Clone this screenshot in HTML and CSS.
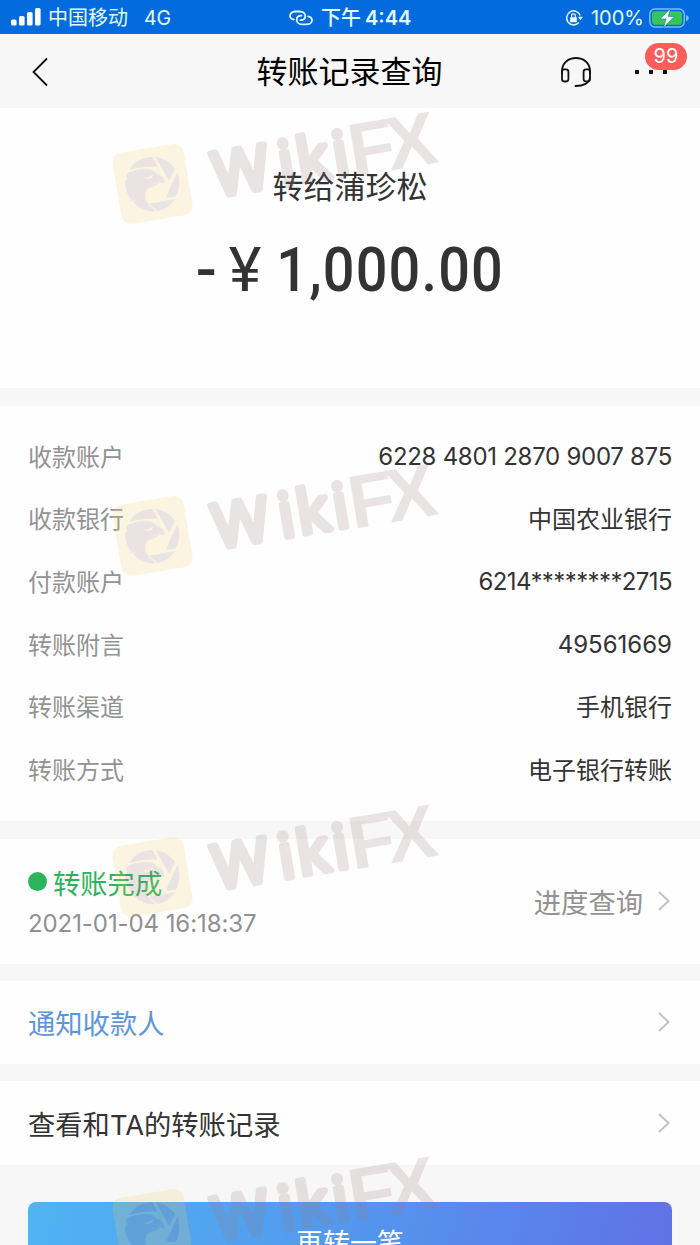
FILE: index.html
```html
<!DOCTYPE html>
<html lang="zh-CN">
<head>
    <meta charset="UTF-8">
    <meta name="viewport" content="width=device-width, initial-scale=1.0">
    <title>转账记录查询</title>
    <link rel="stylesheet" href="styles.css">
</head>
<body>
    <div class="app">
        <div class="status-bar">
            <div class="status-left">
                <svg class="signal" width="30" height="18" viewBox="0 0 30 18" fill="#fff">
                    <rect x="0" y="11.5" width="5.6" height="6" rx="1.6"/>
                    <rect x="8" y="8" width="5.6" height="9.5" rx="1.6"/>
                    <rect x="16" y="4" width="5.6" height="13.5" rx="1.6"/>
                    <rect x="24" y="0" width="5.6" height="17.5" rx="1.6"/>
                </svg>
                <span class="carrier">中国移动</span>
                <span class="network">4G</span>
            </div>
            <div class="status-center">
                <svg width="24" height="16" viewBox="0 0 24 16" fill="none" stroke="#e3fbff" stroke-width="1.8" stroke-linecap="round">
                    <path d="M4.800 9.600C2.300 9 1 7.500 1 5.700C1 3.200 3.500 1.500 6.500 1.500H10.500C14 1.500 16.300 3.500 16.300 6C16.300 8.600 14.200 10.200 11.500 10.200"/>
                    <path d="M19.200 6.300C21.700 6.900 23 8.400 23 10.200C23 12.700 20.500 14.400 17.500 14.400H13.500C10 14.400 7.700 12.400 7.700 9.900C7.700 7.300 9.800 5.700 12.500 5.700"/>
                </svg>
                <span class="clock">下午<b>4:44</b></span>
            </div>
            <div class="status-right">
                <svg width="18" height="18" viewBox="0 0 18 18" fill="none" stroke="#e3fbff" stroke-width="1.5">
                    <path d="M15.200 6.500A7 7 0 1 0 13.800 13.600"/>
                    <path d="M12.800 7.800H18L15.400 11.200Z" fill="#e3fbff" stroke="none"/>
                    <rect x="5.200" y="8.200" width="6.600" height="5" rx=".8" fill="#fff" stroke="none"/>
                    <path d="M6.600 8.200V6.800A1.900 1.900 0 0 1 10.400 6.800V8.200" stroke-width="1.200"/>
                </svg>
                <span class="percent">100%</span>
                <svg width="41" height="20" viewBox="0 0 41 20">
                    <rect x=".8" y="1" width="34.400" height="18" rx="5" fill="none" stroke="#83b9ee" stroke-width="1.500"/>
                    <rect x="3" y="3.200" width="30" height="13.600" rx="3" fill="#35c659"/>
                    <path d="M37 7V13C38.800 12.500 39.800 11.500 39.800 10S38.800 7.500 37 7Z" fill="#83b9ee"/>
                    <path d="M21.500 .6L11 11H17L14.500 19.400L25.200 8.600H19.200Z" fill="#fff" stroke="#1590ae" stroke-width=".7"/>
                </svg>
            </div>
        </div>

        <header class="nav">
            <svg class="back" width="16" height="30" viewBox="0 0 16 30" fill="none" stroke="#111" stroke-width="1.8">
                <path d="M15 1.500L1.500 15L15 28.500"/>
            </svg>
            <h1>转账记录查询</h1>
            <div class="nav-actions">
                <svg width="32" height="32" viewBox="0 0 32 32" fill="none" stroke="#111" stroke-width="1.800" stroke-linecap="round">
                    <path d="M2 17.500V15C2 7 8.500 2 16 2S30 7 30 15V17.500"/>
                    <rect x="2" y="13.300" width="6.400" height="12.200" rx="2.400"/>
                    <rect x="23.600" y="13.300" width="6.400" height="12.200" rx="2.400"/>
                    <path d="M29.800 22C29.400 27 23.500 30 15.500 30"/>
                </svg>
                <div class="more">
                    <i></i><i></i><i></i>
                    <span class="badge">99</span>
                </div>
            </div>
        </header>

        <section class="panel summary">
            <p class="payee">转给蒲珍松</p>
            <p class="amount"><span class="minus">-</span><span class="yuan">¥</span><span class="digits">1,000.00</span></p>
        </section>

        <section class="panel details">
            <div class="row"><span>收款账户</span><span class="value number">6228 4801 2870 9007 875</span></div>
            <div class="row"><span>收款银行</span><span class="value">中国农业银行</span></div>
            <div class="row"><span>付款账户</span><span class="value number masked">6214********2715</span></div>
            <div class="row"><span>转账附言</span><span class="value number memo">49561669</span></div>
            <div class="row"><span>转账渠道</span><span class="value">手机银行</span></div>
            <div class="row"><span>转账方式</span><span class="value">电子银行转账</span></div>
        </section>

        <section class="panel progress">
            <div>
                <p class="state"><i class="dot"></i><span>转账完成</span></p>
                <p class="time">2021-01-04 16:18:37</p>
            </div>
            <div class="progress-link">
                <span>进度查询</span>
                <svg class="chevron" viewBox="0 0 12 20"><path d="M1 1L10.500 10L1 19"/></svg>
            </div>
        </section>

        <section class="panel link notify">
            <span>通知收款人</span>
            <svg class="chevron" viewBox="0 0 12 20"><path d="M1 1L10.500 10L1 19"/></svg>
        </section>

        <section class="panel link history">
            <span>查看和TA的转账记录</span>
            <svg class="chevron" viewBox="0 0 12 20"><path d="M1 1L10.500 10L1 19"/></svg>
        </section>

        <button class="again">再转一笔</button>

        <!-- watermark layer -->
        <svg class="watermarks" width="700" height="1245" viewBox="0 0 700 1245">
            <defs>
                <g id="mark">
                    <rect x="-36" y="-36" width="72" height="72" rx="10" fill="#f0cd6e"/>
                    <g transform="rotate(9.500) scale(.3333) translate(-133.500 -138)">
                        <g fill="#9b7d7d">
                            <path d="M64 96C78 71 105 56 133 57L149 86Q105 84 64 96Z"/>
                            <path d="M143 57C168 61 188 74 201 93L183 128Z"/>
                            <path d="M208 103C217 128 215 153 203 176L174 178Z"/>
                            <path d="M200 184C188 203 171 215 149 219L124 197Z"/>
                            <path d="M60 104C75 99 90 94 110 94C128 92 140 96 146 108C160 110 169 121 168 137C162 132 154 133 149 138C142 146 127 144 118 154C107 166 111 185 121 199L143 219C129 221 117 218 106 214L103 207L102 212C93 208 85 202 78 195L79 185L73 190C59 172 51 153 51 133L60 116L53 120C55 113 57 108 60 104Z"/>
                        </g>
                        <path d="M110 120Q123 122 135 111M119 119Q126 124 131 115" fill="none" stroke="#f0cd6e" stroke-width="4"/>
                        <path d="M131 139Q148 137 161 127" fill="none" stroke="#f0cd6e" stroke-width="2"/>
                    </g>
                    <g fill="#9b7d7d">
                        <text class="mark-round" x="61 127.500 146 182.500" y="23">Wiki</text>
                        <text class="mark-square" x="199 237" y="26">FX</text>
                    </g>
                </g>
            </defs>
            <use href="#mark" opacity=".2" transform="translate(152.500 184) rotate(-9.500)"/>
            <use href="#mark" opacity=".2" transform="translate(152.500 536) rotate(-9.500)"/>
            <use href="#mark" opacity=".2" transform="translate(152.500 877) rotate(-9.500)"/>
            <use href="#mark" opacity=".2" transform="translate(152.500 1229) rotate(-9.500)"/>
        </svg>
    </div>
</body>
</html>
```
FILE: styles.css
```css
* {
    box-sizing: border-box;
}

body {
    margin: 0;
    background: #f7f7f7;
    font-family: Inter, "Noto Sans CJK SC", sans-serif;
    color: #333;
}

h1, p {
    margin: 0;
    font-weight: 400;
}

.app {
    position: relative;
    width: 700px;
    height: 1245px;
    overflow: hidden;
    display: flex;
    flex-direction: column;
}

.status-bar {
    flex: none;
    height: 34px;
    background: #046bde;
    color: #e3fbff;
    display: grid;
    grid-template-columns: 289px 1fr auto;
    align-items: center;
    padding: 2px 10px 0 0;
    font-size: 20px;
    line-height: 32px;
}

.status-left,
.status-center,
.status-right {
    display: flex;
    align-items: center;
}

.signal {
    margin-left: 11px;
    margin-bottom: 2px;
}

.carrier {
    margin-left: 7px;
}

.network {
    margin-left: 16px;
    font-size: 19.500px;
}

.clock {
    margin-left: 8px;
    font-weight: 500;
}

.clock b {
    font-weight: 600;
    margin-left: 4px;
}

.percent {
    margin: 0 5px 0 8px;
}

.nav {
    flex: none;
    height: 74px;
    background: #f7f7f7;
    display: grid;
    grid-template-columns: 1fr auto 1fr;
    align-items: center;
    padding: 2px 33px 0 32px;
    color: #000;
}

.nav h1 {
    font-size: 31px;
    line-height: 40px;
}

.nav-actions {
    display: flex;
    justify-content: flex-end;
    align-items: center;
    gap: 43px;
}

.more {
    position: relative;
    display: flex;
    gap: 10px;
}

.more i {
    width: 4px;
    height: 4px;
    background: #111;
}

.badge {
    position: absolute;
    left: 10px;
    top: -27px;
    width: 42px;
    height: 27px;
    border-radius: 14px;
    background: #fc5d5b;
    color: #fff;
    font-size: 20px;
    line-height: 27px;
    text-align: center;
}

.panel {
    flex: none;
    background: #fefefe;
    margin-bottom: 17px;
}

.summary {
    height: 280px;
    margin-bottom: 18px;
    padding-top: 57px;
    text-align: center;
}

.payee {
    font-size: 31px;
    line-height: 44px;
}

.amount {
    display: flex;
    justify-content: center;
    align-items: center;
    margin-top: 25px;
    font-family: Roboto, sans-serif;
    font-size: 62px;
    font-weight: 500;
    line-height: 72px;
}

.minus {
    margin-right: 12px;
}

.yuan {
    font-weight: 400;
    margin-right: 16px;
}

/* narrow numerals, squeezed towards the right edge */
.digits {
    margin-left: -26px;
    letter-spacing: 1.300px;
    transform: scaleX(.9);
    transform-origin: right center;
}

.details {
    height: 415px;
    margin-bottom: 18px;
    padding: 19px 28px 0;
}

.row {
    display: flex;
    justify-content: space-between;
    align-items: center;
    height: 62.600px;
    font-size: 24px;
    color: #929292;
}

.row span {
    padding-bottom: 2px;
}

.row .value {
    color: #333;
}

.row .number {
    padding-bottom: 0;
    letter-spacing: -.28px;
}

.row .masked {
    letter-spacing: -.6px;
}

.row .memo {
    letter-spacing: 0;
}

.progress {
    height: 125px;
    padding: 3px 30px 0 28px;
    display: flex;
    justify-content: space-between;
    align-items: center;
}

.state {
    display: flex;
    align-items: center;
    font-size: 27.300px;
    line-height: 42px;
    color: #2bb45b;
}

.state span {
    padding-top: 2px;
    margin-bottom: -2px;
}

.dot {
    width: 19px;
    height: 19px;
    border-radius: 50%;
    background: #2bb45b;
    margin: 0 6px 3px 0;
}

.time {
    font-size: 24px;
    line-height: 40px;
    letter-spacing: -.08px;
    color: #909090;
}

.progress-link {
    display: flex;
    align-items: center;
    gap: 15px;
    padding-bottom: 5px;
    font-size: 27.300px;
    color: #929292;
}

.chevron {
    width: 12px;
    height: 20px;
    fill: none;
    stroke: #c4c4c4;
    stroke-width: 2;
}

.link {
    height: 83px;
    padding: 0 30px 2px 28px;
    display: flex;
    justify-content: space-between;
    align-items: center;
    font-size: 27.300px;
}

.notify {
    color: #5b96dd;
}

.history {
    height: 84px;
    padding-bottom: 0;
    margin-bottom: 37px;
}

.again {
    flex: none;
    height: 78px;
    margin: 0 28px;
    border: none;
    border-radius: 8px;
    background: linear-gradient(100deg, #50b4f2, #5397ee 50%, #6071e6);
    color: #fff;
    font-family: inherit;
    font-size: 27px;
}

.watermarks {
    position: absolute;
    left: 0;
    top: 0;
    pointer-events: none;
}

.mark-round {
    font-family: "Open Sans", sans-serif;
    font-size: 61px;
    stroke: #9b7d7d;
    stroke-width: 6px;
    stroke-linejoin: round;
}

.mark-square {
    font-family: "Liberation Sans", sans-serif;
    font-size: 75px;
    font-weight: 700;
}
```
